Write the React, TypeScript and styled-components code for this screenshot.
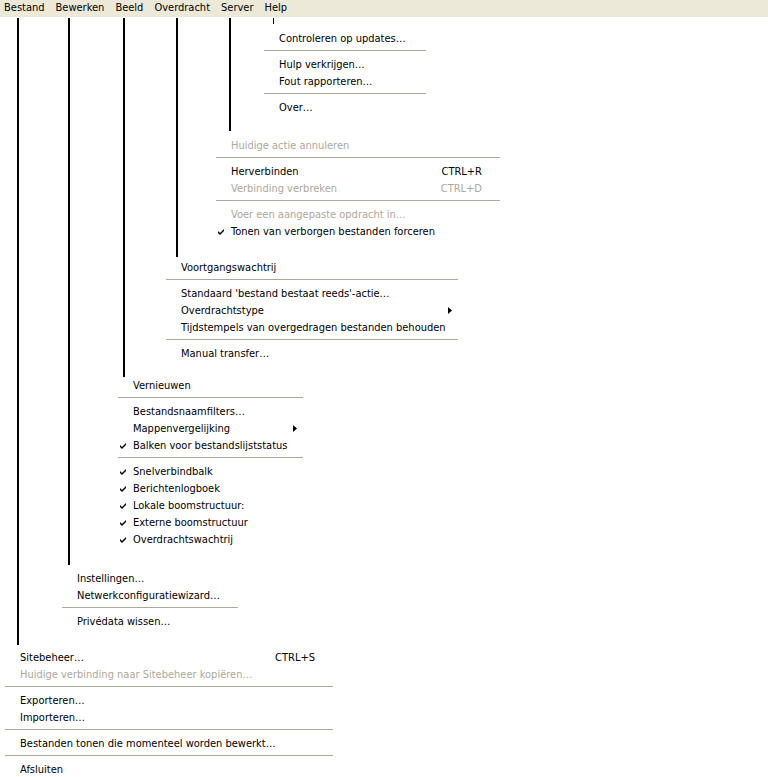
import React from 'react'
import styled, { createGlobalStyle } from 'styled-components'

const GlobalStyle = createGlobalStyle`
  html, body {
    margin: 0;
    padding: 0;
    background: #ffffff;
  }
  body {
    font-family: "DejaVu Sans Condensed", "DejaVu Sans", "Liberation Sans", sans-serif;
    font-size: 11px;
    color: #000000;
  }
`

const Page = styled.div`
  width: 768px;
  height: 777px;
  overflow: hidden;
`

const MenuBar = styled.div`
  display: flex;
  height: 17px;
  background: #ece9d8;
  padding-left: 0;
`

const BarItem = styled.span`
  padding: 0 7px 0 4px;
  line-height: 16px;
  white-space: nowrap;
`

const Stage = styled.div`
  margin-top: 1px;
`

// a connector line drawn down from the menu bar, with its menu below it
const Branch = styled.div<{ $x: number; $tail: number; $gap: number; $h?: number; $w?: number }>`
  margin-left: ${p => p.$x}px;
  border-left: ${p => p.$w ?? 2}px solid #000000;
  padding-bottom: ${p => p.$tail}px;
  margin-bottom: ${p => p.$gap}px;
  ${p => (p.$h !== undefined ? `height: ${p.$h}px;` : '')}
`

const Menu = styled.div<{ $x: number; $w: number }>`
  margin-left: ${p => p.$x}px;
  width: ${p => p.$w}px;
`

const Row = styled.div<{ $disabled?: boolean }>`
  display: flex;
  align-items: center;
  height: 17px;
  padding-right: 18px;
  color: ${p => (p.$disabled ? '#aca899' : '#000000')};
  white-space: nowrap;
`

const CheckCell = styled.span`
  display: flex;
  align-items: center;
  width: 13px;
  padding-left: 2px;
  flex: none;
`

const Label = styled.span`
  flex: 1;
`

const Shortcut = styled.span`
  flex: none;
`

const Arrow = styled.svg`
  flex: none;
  margin-right: -12px;
`

const Separator = styled.div`
  height: 1px;
  margin: 3px 0 5px;
  background: #aca899;
`

type Entry =
  | { sep: true }
  | { sep?: false; label: string; shortcut?: string; disabled?: boolean; checked?: boolean; sub?: boolean }

const Check = () => (
  <svg width="7" height="7" viewBox="0 0 7 7">
    <path d="M0 3 L2 5 L6 1 L6 3 L2 7 L0 5 Z" fill="#000000" />
  </svg>
)

const MenuList = ({ x, w, entries }: { x: number; w: number; entries: Entry[] }) => (
  <Menu $x={x} $w={w}>
    {entries.map((e, i) =>
      e.sep ? (
        <Separator key={i} />
      ) : (
        <Row key={i} $disabled={e.disabled}>
          <CheckCell>{e.checked && <Check />}</CheckCell>
          <Label>{e.label}</Label>
          {e.shortcut && <Shortcut>{e.shortcut}</Shortcut>}
          {e.sub && (
            <Arrow width="4" height="7" viewBox="0 0 4 7">
              <polygon points="0,0 4,3.5 0,7" fill="#000000" />
            </Arrow>
          )}
        </Row>
      )
    )}
  </Menu>
)

const help: Entry[] = [
  { label: 'Controleren op updates…' },
  { sep: true },
  { label: 'Hulp verkrijgen…' },
  { label: 'Fout rapporteren…' },
  { sep: true },
  { label: 'Over…' },
]

const server: Entry[] = [
  { label: 'Huidige actie annuleren', disabled: true },
  { sep: true },
  { label: 'Herverbinden', shortcut: 'CTRL+R' },
  { label: 'Verbinding verbreken', shortcut: 'CTRL+D', disabled: true },
  { sep: true },
  { label: 'Voer een aangepaste opdracht in…', disabled: true },
  { label: 'Tonen van verborgen bestanden forceren', checked: true },
]

const transfer: Entry[] = [
  { label: 'Voortgangswachtrij' },
  { sep: true },
  { label: "Standaard 'bestand bestaat reeds'-actie…" },
  { label: 'Overdrachtstype', sub: true },
  { label: 'Tijdstempels van overgedragen bestanden behouden' },
  { sep: true },
  { label: 'Manual transfer…' },
]

const view: Entry[] = [
  { label: 'Vernieuwen' },
  { sep: true },
  { label: 'Bestandsnaamfilters…' },
  { label: 'Mappenvergelijking', sub: true },
  { label: 'Balken voor bestandslijststatus', checked: true },
  { sep: true },
  { label: 'Snelverbindbalk', checked: true },
  { label: 'Berichtenlogboek', checked: true },
  { label: 'Lokale boomstructuur:', checked: true },
  { label: 'Externe boomstructuur', checked: true },
  { label: 'Overdrachtswachtrij', checked: true },
]

const edit: Entry[] = [
  { label: 'Instellingen…' },
  { label: 'Netwerkconfiguratiewizard…' },
  { sep: true },
  { label: 'Privédata wissen…' },
]

const file: Entry[] = [
  { label: 'Sitebeheer…', shortcut: 'CTRL+S' },
  { label: 'Huidige verbinding naar Sitebeheer kopiëren…', disabled: true },
  { sep: true },
  { label: 'Exporteren…' },
  { label: 'Importeren…' },
  { sep: true },
  { label: 'Bestanden tonen die momenteel worden bewerkt…' },
  { sep: true },
  { label: 'Afsluiten' },
]

const App = () => (
  <>
    <GlobalStyle />
    <Page>
      <MenuBar>
        {['Bestand', 'Bewerken', 'Beeld', 'Overdracht', 'Server', 'Help'].map(m => (
          <BarItem key={m}>{m}</BarItem>
        ))}
      </MenuBar>
      <Stage>
        <Branch $x={17} $tail={15} $gap={4}>
          <Branch $x={49} $tail={17} $gap={5}>
            <Branch $x={53} $tail={15} $gap={0}>
              <Branch $x={51} $tail={17} $gap={2}>
                <Branch $x={51} $tail={15} $gap={6}>
                  <Branch $x={42} $tail={0} $gap={6} $h={6} $w={1} />
                  <MenuList x={33} w={162} entries={help} />
                </Branch>
                <MenuList x={38} w={284} entries={server} />
              </Branch>
              <MenuList x={41} w={292} entries={transfer} />
            </Branch>
            <MenuList x={48} w={185} entries={view} />
          </Branch>
          <MenuList x={43} w={176} entries={edit} />
        </Branch>
        <MenuList x={5} w={328} entries={file} />
      </Stage>
    </Page>
  </>
)

export default App
